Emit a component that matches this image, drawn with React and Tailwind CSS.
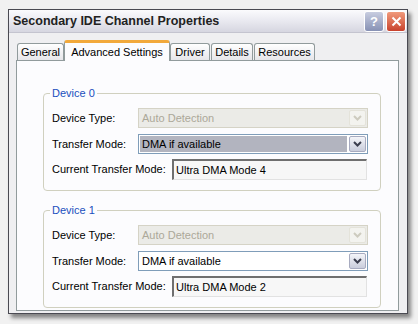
import React from 'react';

const Chevron = ({ color }) => (
  <svg width="9" height="6" viewBox="0 0 9 6">
    <path d="M1 1 L4.5 4.5 L8 1" fill="none" stroke={color} strokeWidth="2" />
  </svg>
);

const Combo = ({ value, disabled = false, focused = false }) => (
  <div
    className={`w-[230px] h-[20px] flex items-stretch border ${
      disabled ? 'border-[#d5d3c6] bg-[#ebebe7]' : 'border-[#7f9db9] bg-white'
    }`}
  >
    <div className="flex-1 p-[1px] flex">
      <div
        className={`flex-1 flex items-center pl-[2px] ${
          focused ? 'bg-[#b2b4bf] text-black' : disabled ? 'text-[#aca899]' : 'text-black'
        }`}
      >
        {value}
      </div>
    </div>
    <div
      className={`w-[17px] m-[1px] rounded-[2px] border flex items-center justify-center ${
        disabled
          ? 'border-[#e4e3da] bg-[#f3f3ef]'
          : 'border-[#a7abc0] bg-gradient-to-b from-[#f4f5f9] to-[#c9cddc]'
      }`}
    >
      <Chevron color={disabled ? '#cdcbbf' : '#3b3e4e'} />
    </div>
  </div>
);

const DeviceGroup = ({ title, mode, focused }) => (
  <div className="relative w-[338px] h-[98px] border border-[#d0d0bf] rounded-[4px] pl-[8px] pt-[14px]">
    <span className="absolute -top-[8px] left-[6px] px-[2px] bg-[#fcfcfe] text-[#1a4fbd] leading-[14px]">
      {title}
    </span>
    <div className="flex items-center h-[20px]">
      <div className="w-[86px]">Device Type:</div>
      <Combo value="Auto Detection" disabled />
    </div>
    <div className="flex items-center h-[20px] mt-[6px]">
      <div className="w-[86px]">Transfer Mode:</div>
      <Combo value="DMA if available" focused={focused} />
    </div>
    <div className="flex items-center h-[21px] mt-[5px]">
      <div className="w-[120px]">Current Transfer Mode:</div>
      <div className="w-[195px] h-[21px] flex items-center pl-[2px] bg-[#f7f7f7] border-t-2 border-l-2 border-r border-b border-t-[#6f6f6f] border-l-[#6f6f6f] border-r-[#e2e2e2] border-b-[#e2e2e2]">
        {mode}
      </div>
    </div>
  </div>
);

const tabs = [
  { label: 'General', w: 'w-[47px]' },
  { label: 'Advanced Settings', w: 'w-[106px]', active: true },
  { label: 'Driver', w: 'w-[40px]' },
  { label: 'Details', w: 'w-[42px] ml-[1px]' },
  { label: 'Resources', w: 'w-[61px] ml-[1px]' },
];

export default function App() {
  return (
    <div className="w-[418px] h-[324px] bg-[#f1f1f1] pl-[8px] pt-[9px] text-[11px] text-black font-['Liberation_Sans',Arial,sans-serif]">
      <div className="w-[400px] h-[305px] flex flex-col border border-[#4a4a52] bg-[#efeff1] shadow-[3px_4px_4px_rgba(0,0,0,0.45)]">
        {/* Title bar */}
        <div className="h-[23px] flex items-center justify-between pl-[4px] pr-[1px] bg-gradient-to-b from-[#fbfbfd] via-[#e9e9f0] to-[#d6d6e0] border-b border-[#c4c4cf]">
          <span className="font-bold text-[12.5px] text-[#222]">Secondary IDE Channel Properties</span>
          <div className="flex gap-[2px]">
            <div className="w-[20px] h-[21px] rounded-[3px] border border-white bg-gradient-to-b from-[#c8cde0] to-[#8791b4] flex items-center justify-center text-white font-bold text-[13px] leading-none">
              ?
            </div>
            <div className="w-[20px] h-[21px] rounded-[3px] border border-white bg-gradient-to-b from-[#f09a7c] to-[#c8412c] flex items-center justify-center">
              <svg width="11" height="11" viewBox="0 0 11 11">
                <path d="M1.5 1.5 L9.5 9.5 M9.5 1.5 L1.5 9.5" stroke="white" strokeWidth="2" />
              </svg>
            </div>
          </div>
        </div>

        {/* Body */}
        <div className="flex-1 flex flex-col pl-[7px] pr-[8px] pt-[7px] pb-[2px]">
          <div className="h-[20px] flex items-end pl-[1px]">
            {tabs.map((t) =>
              t.active ? (
                <div
                  key={t.label}
                  className={`${t.w} h-[21px] -mb-[1px] relative z-10 bg-[#fcfcfe] border-x border-[#919b9c] rounded-t-[3px] border-t-[3px] border-t-[#f2a93b] flex items-start justify-center pt-[1px]`}
                >
                  {t.label}
                </div>
              ) : (
                <div
                  key={t.label}
                  className={`${t.w} h-[17px] border border-b-0 border-[#919b9c] rounded-t-[3px] bg-gradient-to-b from-white to-[#e6e6ea] flex items-center justify-center`}
                >
                  {t.label}
                </div>
              )
            )}
          </div>
          <div className="flex-1 border border-[#919b9c] bg-[#fcfcfe] pl-[26px] pt-[32px] flex flex-col gap-[19px]">
            <DeviceGroup title="Device 0" mode="Ultra DMA Mode 4" focused />
            <DeviceGroup title="Device 1" mode="Ultra DMA Mode 2" />
          </div>
        </div>
      </div>
    </div>
  );
}
